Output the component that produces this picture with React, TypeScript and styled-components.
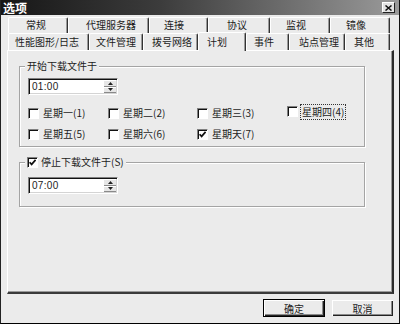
import React from 'react';
import styled, { createGlobalStyle } from 'styled-components';

const GlobalStyle = createGlobalStyle`
    body {
        margin: 0;
        background: #ebebeb;
        font-family: "Noto Sans CJK SC", "Liberation Sans", sans-serif;
        color: #1c1c1c;
    }
`;

const Window = styled.div`
    width: 400px;
    height: 324px;
    box-sizing: border-box;
    background: #ebebeb;
    border-left: 1px solid #222;
    border-right: 1px solid #111;
    border-bottom: 1px solid #000;
    display: flex;
    flex-direction: column;
    overflow: hidden;
`;

const TitleBar = styled.div`
    height: 15px;
    flex: none;
    background: linear-gradient(to right, #161616 0%, #3c3c3c 40%, #9a9a9a 100%);
    display: flex;
    align-items: center;
    justify-content: space-between;
    padding: 0 4px 0 2px;
`;

const Title = styled.span`
    color: #fff;
    font-size: 12px;
    font-weight: bold;
    line-height: 15px;
`;

const CloseButton = styled.div`
    width: 13px;
    height: 11px;
    box-sizing: border-box;
    background: #e4e4e4;
    border-top: 1px solid #fff;
    border-left: 1px solid #fff;
    border-right: 1px solid #222;
    border-bottom: 1px solid #222;
    display: flex;
    align-items: center;
    justify-content: center;
`;

const TabRow = styled.div<{ $top?: number }>`
    display: flex;
    margin-left: 7px;
    margin-top: ${p => p.$top ?? 0}px;
    flex: none;
`;

const Tab = styled.div<{ $w: number; $pl: number; $h: number; $active?: boolean }>`
    width: ${p => p.$w}px;
    height: ${p => p.$h}px;
    box-sizing: border-box;
    padding-left: ${p => p.$pl}px;
    font-size: 10px;
    line-height: ${p => p.$h - 2}px;
    white-space: nowrap;
    border-top: 1px solid #fff;
    border-left: 1px solid #fff;
    border-right: 1px solid #333;
    box-shadow: inset -1px 0 0 #9a9a9a;
    border-radius: 2px 2px 0 0;
    background: #ebebeb;
    position: relative;
    z-index: ${p => (p.$active ? 2 : 0)};
    margin-bottom: ${p => (p.$active ? -1 : 0)}px;
    margin-top: ${p => (p.$active ? -1 : 0)}px;
`;

const Panel = styled.div`
    margin-left: 6px;
    width: 387px;
    height: 244px;
    flex: none;
    box-sizing: border-box;
    border-top: 1px solid #fff;
    border-left: 1px solid #fff;
    border-right: 2px solid #2a2a2a;
    border-bottom: 2px solid #3a3a3a;
    box-shadow: inset -1px -1px 0 #9a9a9a;
    padding: 9px 0 0 11px;
    display: flex;
    flex-direction: column;
    gap: 9px;
`;

const Group = styled.fieldset<{ $h: number }>`
    margin: 0;
    width: 346px;
    height: ${p => p.$h}px;
    box-sizing: border-box;
    border: 1px solid #a4a4a4;
    box-shadow: 1px 1px 0 #fff, inset 1px 1px 0 #fff;
    padding: 0 0 0 8px;
    min-width: 0;
`;

const Legend = styled.legend`
    font-size: 10px;
    line-height: 12px;
    padding: 0 2px;
    margin-left: -3px;
    background: #ebebeb;
    display: flex;
    align-items: center;
    gap: 3px;
`;

const SpinBox = styled.div<{ $mt: number }>`
    width: 90px;
    height: 17px;
    margin-top: ${p => p.$mt}px;
    box-sizing: border-box;
    background: #fff;
    border-top: 1px solid #808080;
    border-left: 1px solid #808080;
    border-right: 1px solid #fff;
    border-bottom: 1px solid #fff;
    box-shadow: inset 1px 1px 0 #111, inset -1px -1px 0 #d4d4d4;
    display: flex;
    align-items: center;
    justify-content: space-between;
    padding: 1px 1px 1px 3px;
`;

const TimeText = styled.span`
    font-family: "Liberation Sans", sans-serif;
    font-size: 10px;
    letter-spacing: 0.3px;
`;

const Spinners = styled.div`
    display: flex;
    flex-direction: column;
    height: 100%;
    width: 12px;
`;

const SpinButton = styled.div`
    flex: 1;
    background: #e6e6e6;
    border-top: 1px solid #fff;
    border-bottom: 1px solid #8a8a8a;
    display: flex;
    align-items: center;
    justify-content: center;
`;

const DayGrid = styled.div`
    display: grid;
    grid-template-columns: 80px 89px 90px auto;
    row-gap: 5px;
    margin-top: 10px;
`;

const Day = styled.label<{ $raise?: boolean }>`
    display: flex;
    align-items: center;
    gap: 2px;
    font-size: 10px;
    line-height: 12px;
    margin-top: ${p => (p.$raise ? -3 : 0)}px;
`;

const Box = styled.span`
    width: 11px;
    height: 11px;
    flex: none;
    box-sizing: border-box;
    background: #fff;
    border-top: 1px solid #808080;
    border-left: 1px solid #808080;
    border-right: 1px solid #fff;
    border-bottom: 1px solid #fff;
    box-shadow: inset 1px 1px 0 #111;
    display: flex;
    align-items: center;
    justify-content: center;
`;

const DayText = styled.span<{ $focus?: boolean }>`
    padding: 1px 1px;
    border: 1px dotted ${p => (p.$focus ? '#333' : 'transparent')};
    white-space: nowrap;
`;

const Footer = styled.div`
    display: flex;
    justify-content: flex-end;
    gap: 6px;
    padding: 5px 5px 0 0;
`;

const Button = styled.div<{ $default?: boolean }>`
    width: ${p => (p.$default ? 62 : 63)}px;
    height: 18px;
    box-sizing: border-box;
    font-size: 10px;
    display: flex;
    align-items: center;
    justify-content: center;
    background: #ebebeb;
    border: 1px solid ${p => (p.$default ? '#000' : 'transparent')};
    box-shadow: inset 1px 1px 0 #fff, inset -1px -1px 0 #222, inset -2px -2px 0 #8a8a8a;
`;

const Check = () => (
    <svg width="7" height="7" viewBox="0 0 7 7">
        <path d="M0.6 3.2 L2.6 5.4 L6.6 0.8" fill="none" stroke="#111" strokeWidth="1.7" />
    </svg>
);

const Arrow = ({ up }: { up?: boolean }) => (
    <svg width="5" height="3" viewBox="0 0 5 3">
        <path d={up ? 'M0 3 L2.5 0 L5 3 Z' : 'M0 0 L2.5 3 L5 0 Z'} fill="#222" />
    </svg>
);

const Spin = ({ value, mt }: { value: string; mt: number }) => (
    <SpinBox $mt={mt}>
        <TimeText>{value}</TimeText>
        <Spinners>
            <SpinButton><Arrow up /></SpinButton>
            <SpinButton><Arrow /></SpinButton>
        </Spinners>
    </SpinBox>
);

const topTabs = [
    { label: '常规', w: 60, pl: 17 },
    { label: '代理服务器', w: 81, pl: 17 },
    { label: '连接', w: 59, pl: 14 },
    { label: '协议', w: 62, pl: 18 },
    { label: '监视', w: 60, pl: 15 },
    { label: '镜像', w: 60, pl: 15 },
];

const bottomTabs = [
    { label: '性能图形/日志', w: 81, pl: 6 },
    { label: '文件管理', w: 54, pl: 6 },
    { label: '拨号网络', w: 55, pl: 8 },
    { label: '计划', w: 48, pl: 8, active: true },
    { label: '事件', w: 43, pl: 7 },
    { label: '站点管理', w: 56, pl: 9 },
    { label: '其他', w: 45, pl: 8 },
];

const days = [
    { label: '星期一', key: '1' },
    { label: '星期二', key: '2' },
    { label: '星期三', key: '3' },
    { label: '星期四', key: '4', focus: true },
    { label: '星期五', key: '5' },
    { label: '星期六', key: '6' },
    { label: '星期天', key: '7', checked: true },
];

function App() {
    return (
        <>
            <GlobalStyle />
            <Window>
                <TitleBar>
                    <Title>选项</Title>
                    <CloseButton>
                        <svg width="7" height="6" viewBox="0 0 7 6">
                            <path d="M0.5 0.5 L6.5 5.5 M6.5 0.5 L0.5 5.5" stroke="#111" strokeWidth="1.5" />
                        </svg>
                    </CloseButton>
                </TitleBar>
                <TabRow $top={2}>
                    {topTabs.map(t => (
                        <Tab key={t.label} $w={t.w} $pl={t.pl} $h={16}>{t.label}</Tab>
                    ))}
                </TabRow>
                <TabRow>
                    {bottomTabs.map(t => (
                        <Tab key={t.label} $w={t.w} $pl={t.pl} $h={t.active ? 19 : 17} $active={t.active}>
                            {t.label}
                        </Tab>
                    ))}
                </TabRow>
                <Panel>
                    <Group $h={87}>
                        <Legend>开始下载文件于</Legend>
                        <Spin value="01:00" mt={6} />
                        <DayGrid>
                            {days.map(d => (
                                <Day key={d.key} $raise={d.focus}>
                                    <Box>{d.checked && <Check />}</Box>
                                    <DayText $focus={d.focus}>{d.label}({d.key})</DayText>
                                </Day>
                            ))}
                        </DayGrid>
                    </Group>
                    <Group $h={51}>
                        <Legend>
                            <Box><Check /></Box>
                            停止下载文件于(S)
                        </Legend>
                        <Spin value="07:00" mt={9} />
                    </Group>
                </Panel>
                <Footer>
                    <Button $default>确定</Button>
                    <Button>取消</Button>
                </Footer>
            </Window>
        </>
    );
}

export default App;
